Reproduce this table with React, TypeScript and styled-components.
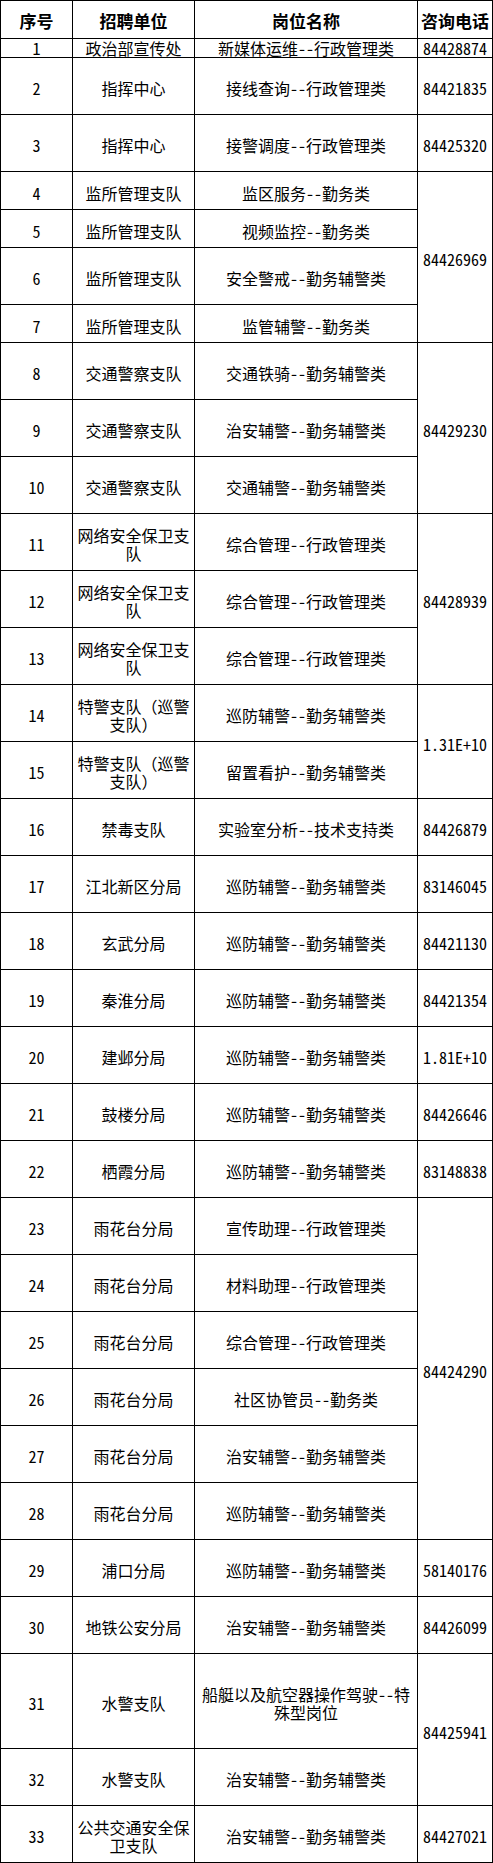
import React from "react";
import styled, { createGlobalStyle } from "styled-components";

const GlobalStyle = createGlobalStyle`
  html, body {
    margin: 0;
    padding: 0;
    background: #ffffff;
  }
  body {
    font-family: "Noto Sans Mono CJK SC", "Noto Sans CJK SC", sans-serif;
    color: #000000;
  }
`;

type Row = {
  n: number;
  unit: string;
  pos: string;
  h: number;
  phone?: string;
  span?: number;
};

const rows: Row[] = [
  { n: 1, unit: "政治部宣传处", pos: "新媒体运维--行政管理类", h: 19, phone: "84428874" },
  { n: 2, unit: "指挥中心", pos: "接线查询--行政管理类", h: 57, phone: "84421835" },
  { n: 3, unit: "指挥中心", pos: "接警调度--行政管理类", h: 57, phone: "84425320" },
  { n: 4, unit: "监所管理支队", pos: "监区服务--勤务类", h: 38, phone: "84426969", span: 4 },
  { n: 5, unit: "监所管理支队", pos: "视频监控--勤务类", h: 38 },
  { n: 6, unit: "监所管理支队", pos: "安全警戒--勤务辅警类", h: 57 },
  { n: 7, unit: "监所管理支队", pos: "监管辅警--勤务类", h: 38 },
  { n: 8, unit: "交通警察支队", pos: "交通铁骑--勤务辅警类", h: 57, phone: "84429230", span: 3 },
  { n: 9, unit: "交通警察支队", pos: "治安辅警--勤务辅警类", h: 57 },
  { n: 10, unit: "交通警察支队", pos: "交通辅警--勤务辅警类", h: 57 },
  { n: 11, unit: "网络安全保卫支队", pos: "综合管理--行政管理类", h: 57, phone: "84428939", span: 3 },
  { n: 12, unit: "网络安全保卫支队", pos: "综合管理--行政管理类", h: 57 },
  { n: 13, unit: "网络安全保卫支队", pos: "综合管理--行政管理类", h: 57 },
  { n: 14, unit: "特警支队（巡警支队）", pos: "巡防辅警--勤务辅警类", h: 57, phone: "1.31E+10", span: 2 },
  { n: 15, unit: "特警支队（巡警支队）", pos: "留置看护--勤务辅警类", h: 57 },
  { n: 16, unit: "禁毒支队", pos: "实验室分析--技术支持类", h: 57, phone: "84426879" },
  { n: 17, unit: "江北新区分局", pos: "巡防辅警--勤务辅警类", h: 57, phone: "83146045" },
  { n: 18, unit: "玄武分局", pos: "巡防辅警--勤务辅警类", h: 57, phone: "84421130" },
  { n: 19, unit: "秦淮分局", pos: "巡防辅警--勤务辅警类", h: 57, phone: "84421354" },
  { n: 20, unit: "建邺分局", pos: "巡防辅警--勤务辅警类", h: 57, phone: "1.81E+10" },
  { n: 21, unit: "鼓楼分局", pos: "巡防辅警--勤务辅警类", h: 57, phone: "84426646" },
  { n: 22, unit: "栖霞分局", pos: "巡防辅警--勤务辅警类", h: 57, phone: "83148838" },
  { n: 23, unit: "雨花台分局", pos: "宣传助理--行政管理类", h: 57, phone: "84424290", span: 6 },
  { n: 24, unit: "雨花台分局", pos: "材料助理--行政管理类", h: 57 },
  { n: 25, unit: "雨花台分局", pos: "综合管理--行政管理类", h: 57 },
  { n: 26, unit: "雨花台分局", pos: "社区协管员--勤务类", h: 57 },
  { n: 27, unit: "雨花台分局", pos: "治安辅警--勤务辅警类", h: 57 },
  { n: 28, unit: "雨花台分局", pos: "巡防辅警--勤务辅警类", h: 57 },
  { n: 29, unit: "浦口分局", pos: "巡防辅警--勤务辅警类", h: 57, phone: "58140176" },
  { n: 30, unit: "地铁公安分局", pos: "治安辅警--勤务辅警类", h: 57, phone: "84426099" },
  { n: 31, unit: "水警支队", pos: "船艇以及航空器操作驾驶--特殊型岗位", h: 95, phone: "84425941", span: 2 },
  { n: 32, unit: "水警支队", pos: "治安辅警--勤务辅警类", h: 57 },
  { n: 33, unit: "公共交通安全保卫支队", pos: "治安辅警--勤务辅警类", h: 57, phone: "84427021" },
];

const Sheet = styled.div<{ $rows: string }>`
  display: grid;
  grid-template-columns: 71px 121px 222px 74px;
  grid-template-rows: ${(p) => p.$rows};
  gap: 1px;
  padding: 1px;
  width: 493px;
  box-sizing: border-box;
  background: #000000;
`;

const Cell = styled.div<{ $span?: number; $compact?: boolean }>`
  display: flex;
  align-items: center;
  justify-content: center;
  text-align: center;
  background: #ffffff;
  font-size: 16px;
  line-height: 18px;
  padding: ${(p) => (p.$compact ? "0 2px" : "4px 2px 0")};
  box-sizing: border-box;
  min-width: 0;
  min-height: 0;
  grid-row: ${(p) => (p.$span && p.$span > 1 ? `span ${p.$span}` : "auto")};
`;

const HeadCell = styled(Cell)`
  font-size: 17px;
  font-weight: 700;
  padding-top: 3px;
`;

const PosCell = styled(Cell)`
  padding-left: 4px;
  padding-right: 4px;
`;

const PhoneCell = styled(Cell)`
  padding-left: 0;
  padding-right: 0;
`;

export default function App() {
  const template = ["37px", ...rows.map((r) => `${r.h - 1}px`)].join(" ");
  return (
    <>
      <GlobalStyle />
      <Sheet $rows={template}>
        <HeadCell>序号</HeadCell>
        <HeadCell>招聘单位</HeadCell>
        <HeadCell>岗位名称</HeadCell>
        <HeadCell>咨询电话</HeadCell>
        {rows.map((r) => {
          const compact = r.h < 30;
          return (
            <React.Fragment key={r.n}>
              <Cell $compact={compact}>{r.n}</Cell>
              <Cell $compact={compact}>{r.unit}</Cell>
              <PosCell $compact={compact}>{r.pos}</PosCell>
              {r.phone && (
                <PhoneCell $compact={compact} $span={r.span}>
                  {r.phone}
                </PhoneCell>
              )}
            </React.Fragment>
          );
        })}
      </Sheet>
    </>
  );
}
